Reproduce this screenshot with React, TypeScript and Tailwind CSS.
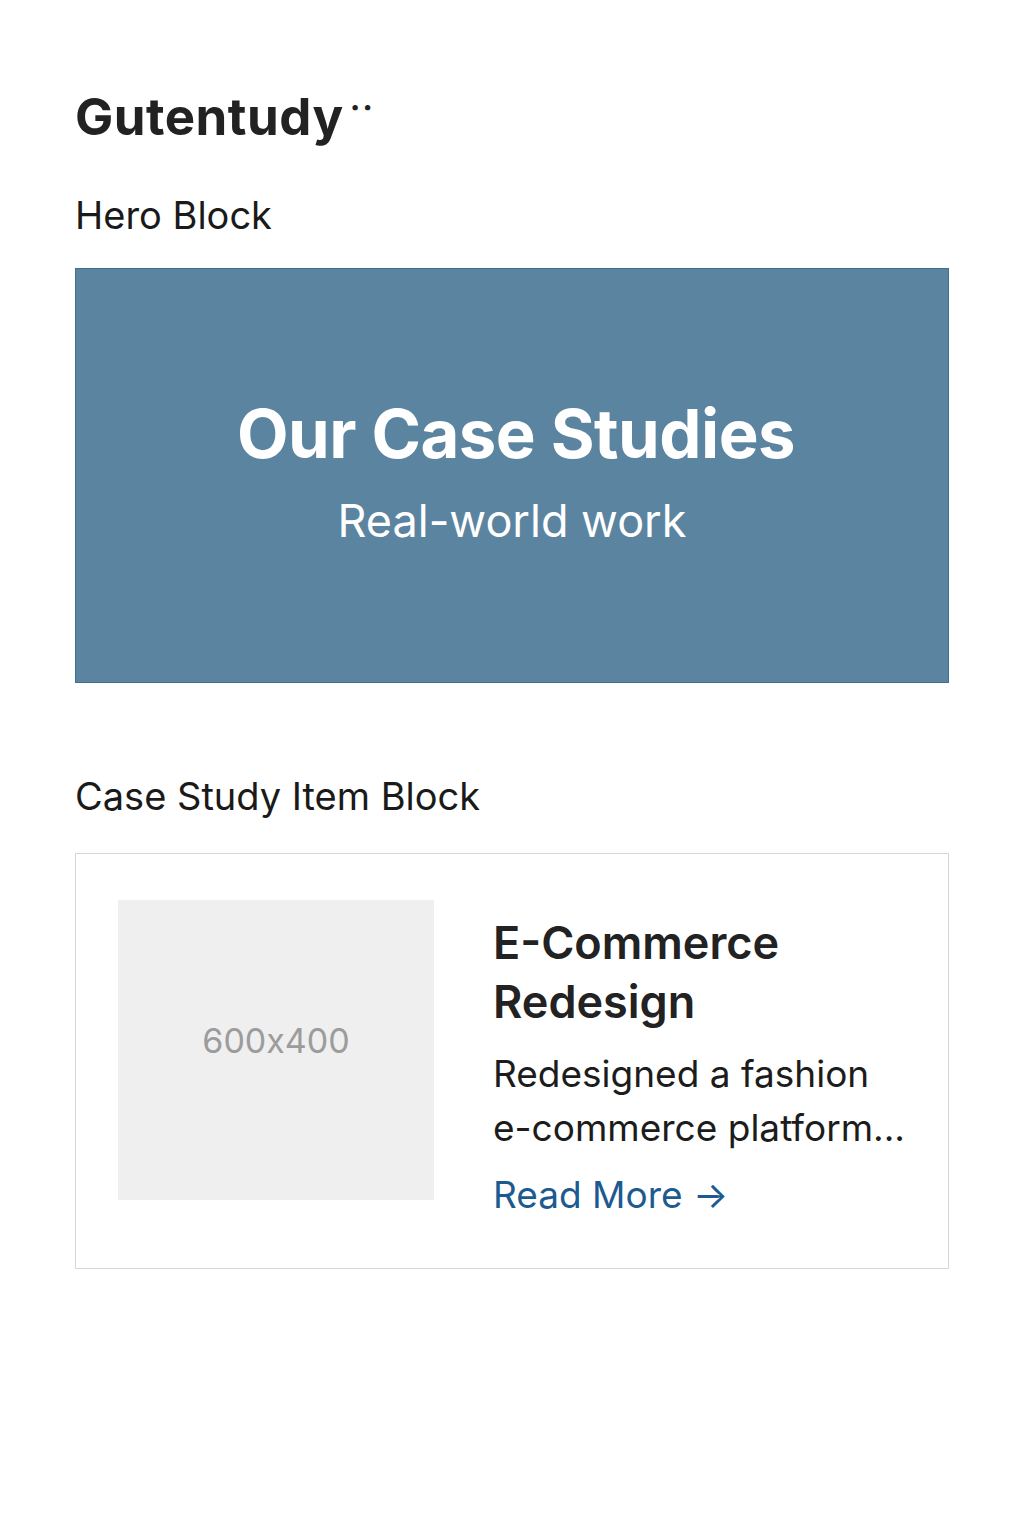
import React from 'react';

// Gutenberg block preview: hero + case study item

function HeroBlock() {
  return (
    <div className="flex h-[415px] flex-col items-center justify-center border border-[#3f6e8e] bg-[#5b84a0] text-white">
      <h2 className="mt-[-9px] ml-[8px] text-[67px] font-bold leading-[80px] tracking-[-0.5px]">Our Case Studies</h2>
      <p className="mt-[19px] text-[45px] font-normal leading-[56px]">Real-world work</p>
    </div>
  );
}

function CaseStudyItem() {
  return (
    <div className="flex items-start border border-[#d6d6d6] bg-white pl-[42px] pr-[40px] pt-[46px] pb-[46px]">
      <div className="flex h-[300px] w-[316px] shrink-0 items-center justify-center bg-[#efefef] pb-[20px]">
        <span className="text-[34px] text-[#9c9c9c] [font-feature-settings:'calt'_0]">600x400</span>
      </div>
      <div className="ml-[59px] flex flex-col pt-[13px]">
        <h3 className="text-[45px] font-semibold leading-[59px] text-[#222]">
          E-Commerce
          <br />
          Redesign
        </h3>
        <p className="mt-[16px] text-[37px] leading-[54px] text-[#1c1c1c]">
          Redesigned a fashion
          <br />
          e-commerce platform...
        </p>
        <a href="#" className="mt-[12px] text-[37px] leading-[55px] text-[#1d5a90]">
          Read More →
        </a>
      </div>
    </div>
  );
}

export default function App() {
  return (
    <div className="min-h-[1536px] bg-white px-[75px] pt-[82px] font-['Inter','Liberation_Sans',sans-serif] text-[#1a1a1a]">
      <h1 className="text-[51px] font-bold leading-[70px] tracking-[0.5px] text-[#222]">
        Gutentudy<span className="ml-[6px] align-[16px] text-[32px] leading-[30px] tracking-[2px]">··</span>
      </h1>

      <h2 className="mt-[38px] text-[38px] font-normal leading-[50px] text-[#1a1a1a]">Hero Block</h2>
      <div className="mt-[28px]">
        <HeroBlock />
      </div>

      <h2 className="mt-[88px] text-[38px] font-normal leading-[50px] text-[#1a1a1a]">Case Study Item Block</h2>
      <div className="mt-[32px]">
        <CaseStudyItem />
      </div>
    </div>
  );
}
